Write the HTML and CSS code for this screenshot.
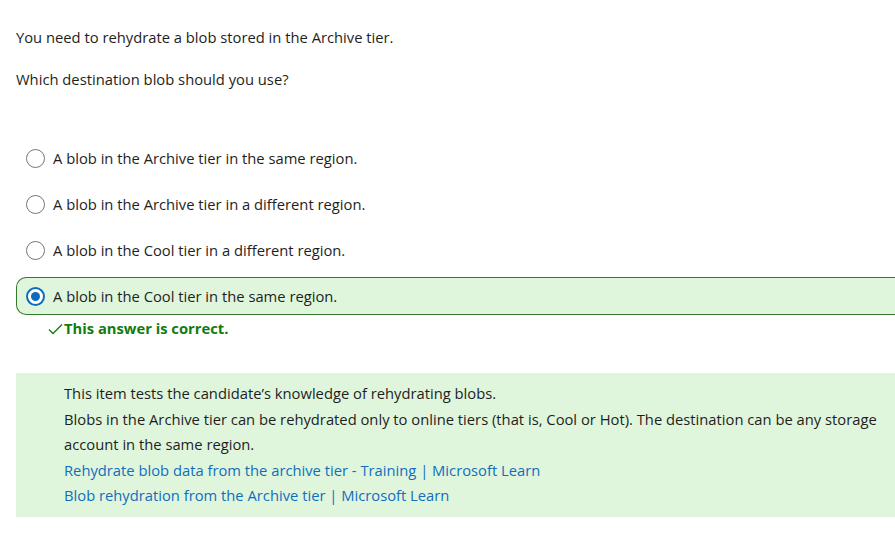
FILE: index.html
```html
<!DOCTYPE html>
<html lang="en">
<head>
<meta charset="utf-8">
<title>Question</title>
<link rel="stylesheet" href="styles.css">
</head>
<body>
<div class="page">
  <p class="stem">You need to rehydrate a blob stored in the Archive tier.</p>
  <p class="stem stem-q">Which destination blob should you use?</p>

  <div class="options">
    <div class="option">
      <span class="radio"></span>
      <span class="label">A blob in the Archive tier in the same region.</span>
    </div>
    <div class="option">
      <span class="radio"></span>
      <span class="label">A blob in the Archive tier in a different region.</span>
    </div>
    <div class="option">
      <span class="radio"></span>
      <span class="label">A blob in the Cool tier in a different region.</span>
    </div>
    <div class="option option-selected">
      <span class="radio radio-checked"></span>
      <span class="label">A blob in the Cool tier in the same region.</span>
    </div>
  </div>

  <div class="feedback">
    <svg class="check" width="15" height="12" viewBox="0 0 15 12"><path d="M1 6.5 L5 10.5 L14 1.5" fill="none" stroke="#107c10" stroke-width="1.3"/></svg>
    <span>This answer is correct.</span>
  </div>

  <div class="explanation">
    <p>This item tests the candidate’s knowledge of rehydrating blobs.</p>
    <p>Blobs in the Archive tier can be rehydrated only to online tiers (that is, Cool or Hot). The destination can be any storage account in the same region.</p>
    <p><a href="#">Rehydrate blob data from the archive tier - Training | Microsoft Learn</a></p>
    <p><a href="#">Blob rehydration from the Archive tier | Microsoft Learn</a></p>
  </div>
</div>
</body>
</html>
```

FILE: styles.css
```css
html, body {
  margin: 0;
  padding: 0;
  background: #ffffff;
  overflow: hidden;
}

body {
  font-family: "Open Sans", "Noto Sans", sans-serif;
  font-size: 14.75px;
  color: #1e1e1e;
}

.page {
  width: 910px;
  padding: 27px 0 0 16px;
}

.stem {
  margin: 0;
  line-height: 20px;
}

.stem-q {
  margin-top: 22px;
}

.options {
  margin-top: 50px;
  display: flex;
  flex-direction: column;
  gap: 8px;
}

.option {
  display: flex;
  align-items: center;
  gap: 8px;
  height: 38px;
  padding-left: 9px;
  box-sizing: border-box;
  border: 1px solid transparent;
  border-radius: 10px 0 0 10px;
}

.option-selected {
  background: #dff6dd;
  border-color: #357a2b;
  border-right: none;
}

.radio {
  width: 19px;
  height: 19px;
  box-sizing: border-box;
  border: 1px solid #767676;
  border-radius: 50%;
  background: #ffffff;
  flex: none;
}

.radio-checked {
  border: 2px solid #0f6cbd;
  display: flex;
  align-items: center;
  justify-content: center;
}

.radio-checked::after {
  content: "";
  width: 9px;
  height: 9px;
  border-radius: 50%;
  background: #0f6cbd;
}

.label {
  line-height: 20px;
}

.feedback {
  display: flex;
  align-items: center;
  gap: 1px;
  margin: 3px 0 0 32px;
  height: 20px;
  color: #107c10;
  font-weight: 700;
}

.check {
  display: block;
  margin-top: 2px;
}

.explanation {
  margin-top: 35px;
  background: #dff6dd;
  padding: 8px 30px 8px 48px;
}

.explanation p {
  margin: 0;
  line-height: 25.5px;
}

.explanation a {
  color: #106ebe;
  text-decoration: none;
}
```
